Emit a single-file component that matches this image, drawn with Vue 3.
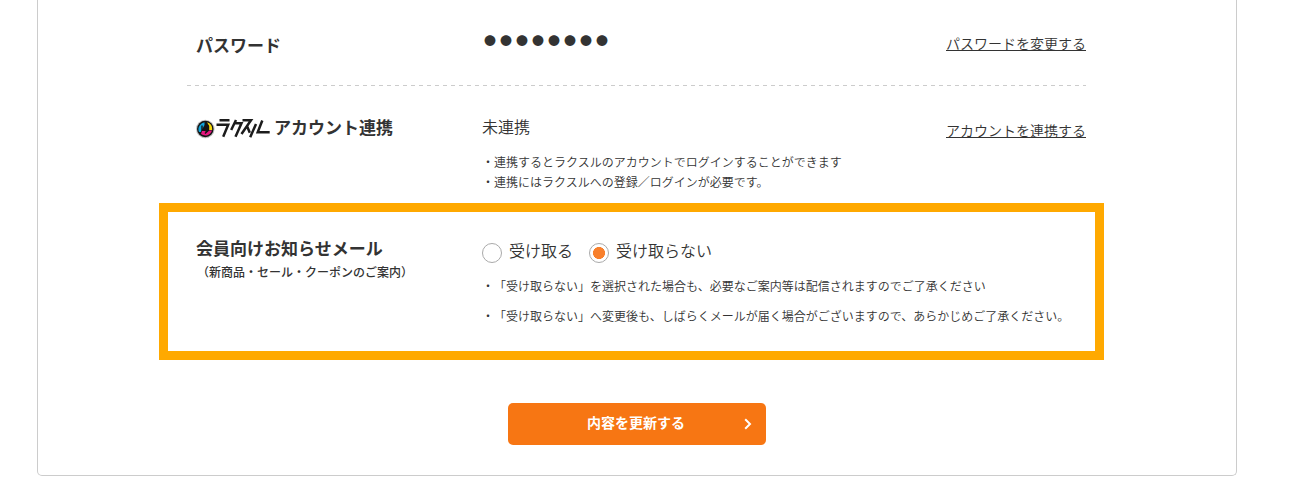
<script setup>
import { ref } from 'vue'

const mail = ref('off')

const options = [
  { value: 'on', label: '受け取る' },
  { value: 'off', label: '受け取らない' },
]
</script>

<template>
  <main class="card">
    <div class="rows">
      <section class="row row--password">
        <h2 class="label">パスワード</h2>
        <div class="password">●●●●●●●●</div>
        <a class="link" href="#">パスワードを変更する</a>
      </section>

      <section class="row row--account">
        <h2 class="label label--logo">
          <svg class="logo" viewBox="0 0 76 22" fill="none" aria-hidden="true">
            <circle cx="9.3" cy="12" r="9.3" fill="#c4c4c4"/>
            <circle cx="9.3" cy="12" r="8.3" fill="#151515"/>
            <path d="M4 8a7 7 0 0 1 4.5-2.8V8L4.8 15H3A7 7 0 0 1 4 8z" fill="#12a5dc"/>
            <path d="M11 5.2a7 7 0 0 1 5.2 7.8h-3V9z" fill="#f5d90a"/>
            <path d="M5 17l1-3h3.5v1.5l4-2H16A7 7 0 0 1 5 17z" fill="#e6157f"/>
            <path d="M6 8.5v4.8h2.7M11.7 8v6L9 16.5" stroke="#151515" stroke-width="1.4"/>
            <g stroke="#1c1c1c" stroke-width="2.5">
              <path d="M23.5 3.2h10M20.5 7.8h11.7l-5 12"/>
              <path d="M40 3l-4.8 10M38.8 6.2h6.7l-6 13.6"/>
              <path d="M46.5 3.2h8.5L45.5 17M51.2 9.5l2.6 6.3"/>
              <path d="M60 7l-5.8 13.2M66.3 3.5l-4.6 11.7h12"/>
            </g>
          </svg>
          アカウント連携
        </h2>
        <div>
          <div class="value">未連携</div>
          <ul class="notes">
            <li>・連携するとラクスルのアカウントでログインすることができます</li>
            <li>・連携にはラクスルへの登録／ログインが必要です。</li>
          </ul>
        </div>
        <a class="link" href="#">アカウントを連携する</a>
      </section>

      <section class="row row--mail">
        <h2 class="label">
          会員向けお知らせメール
          <small class="sub">（新商品・セール・クーポンのご案内）</small>
        </h2>
        <div class="wide">
          <div class="radios">
            <label v-for="o in options" :key="o.value" class="radio">
              <input v-model="mail" class="radio-input" type="radio" name="mail" :value="o.value">
              {{ o.label }}
            </label>
          </div>
          <ul class="notes notes--loose">
            <li>・「受け取らない」を選択された場合も、必要なご案内等は配信されますのでご了承ください</li>
            <li>・「受け取らない」へ変更後も、しばらくメールが届く場合がございますので、あらかじめご了承ください。</li>
          </ul>
        </div>
        <div class="highlight"></div>
      </section>
    </div>

    <button class="submit" type="button">
      内容を更新する
      <svg class="arrow" viewBox="0 0 8 12" fill="none" aria-hidden="true">
        <path d="M1.2 1.2L6 6l-4.8 4.8" stroke="#fff" stroke-width="2"/>
      </svg>
    </button>
  </main>
</template>

<style>
body { background: #fff; }
</style>

<style scoped>
.card {
  box-sizing: border-box;
  width: 1200px;
  height: 476px;
  margin-left: 37px;
  padding: 0 150px 0 149px;
  border: 1px solid #ccc;
  border-top: 0;
  border-radius: 0 0 5px 5px;
  color: #333;
  font-family: "Noto Sans CJK JP", sans-serif;
  font-size: 16px;
  font-weight: 350;
  line-height: 20px;
  text-spacing-trim: space-all;
}

.row {
  box-sizing: border-box;
  position: relative;
  display: grid;
  grid-template-columns: 286px 1fr auto;
  align-items: start;
  padding-left: 9px;
}

.row--password {
  height: 86px;
  padding-top: 35px;
  background: repeating-linear-gradient(90deg, #ccc 0 4px, transparent 4px 8px) 0 100% / 100% 1px no-repeat;
}

.row--account {
  height: 117px;
  padding-top: 30px;
}

.row--mail {
  height: 157px;
  padding-top: 35px;
}

.label {
  margin: 0;
  font-size: 17px;
  font-weight: 700;
}

.label--logo {
  display: flex;
  align-items: center;
  gap: 2px;
}

.logo {
  width: 76px;
  height: 22px;
  margin: 1px 0 -1px;
}

.sub {
  display: block;
  margin-top: 4px;
  padding-left: 1px;
  font-size: 12px;
  font-weight: 500;
}

.password {
  font-size: 12px;
  line-height: 12px;
  letter-spacing: 4px;
  padding-left: 2px;
}

.link {
  margin-top: -2px;
  color: #333;
  font-size: 14px;
  text-underline-offset: 1px;
}

.row--account .link {
  margin-top: 4px;
}

.notes {
  margin: 16px 0 0;
  padding: 0;
  list-style: none;
  font-size: 12px;
  white-space: nowrap;
}

.notes--loose {
  display: grid;
  gap: 10px;
  margin-top: 15px;
}

.wide {
  grid-column: 2 / 4;
}

.radios {
  display: flex;
  gap: 16px;
  margin-top: 3px;
}

.radio {
  display: flex;
  align-items: center;
  gap: 7px;
  height: 18px;
  margin-bottom: 2px;
  line-height: 18px;
}

.radio-input {
  appearance: none;
  box-sizing: border-box;
  width: 20px;
  height: 20px;
  margin: 3px 0 -3px;
  border: 1px solid #aaa;
  border-radius: 50%;
  background: #fff;
}

.radio-input:checked {
  background: radial-gradient(circle, #f8802d 5.7px, #fff 6.3px);
}

/* frame drawn around the whole mail row, wider than the row itself */
.highlight {
  position: absolute;
  inset: 0 -18px 0 -28px;
  border: 9px solid #ffa900;
  pointer-events: none;
}

.submit {
  position: relative;
  display: block;
  width: 258px;
  height: 42px;
  margin: 43px 0 0 321px;
  padding: 0 2px 4px 0;
  border: 0;
  border-radius: 5px;
  background: #f77613;
  color: #fff;
  font: inherit;
  font-size: 14px;
  font-weight: 700;
}

.arrow {
  position: absolute;
  top: 15px;
  right: 14px;
  width: 8px;
  height: 12px;
}
</style>
